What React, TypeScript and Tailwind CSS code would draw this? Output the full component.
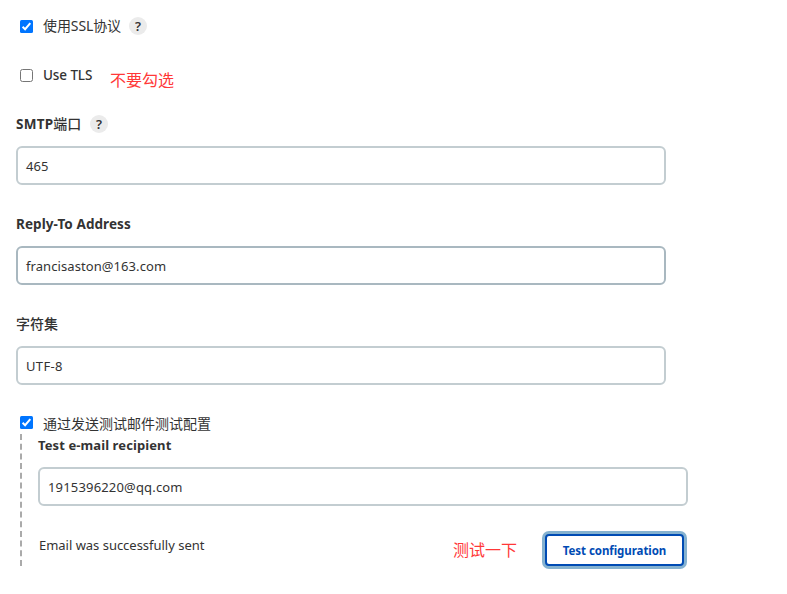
import type { ReactNode } from 'react';

function Checkbox({ checked }: { checked?: boolean }) {
  return checked ? (
    <svg className="h-[13px] w-[13px] shrink-0" viewBox="0 0 13 13">
      <rect width="13" height="13" rx="1.5" fill="#0075ff" />
      <path d="M2.6 6.8 5.1 9.2 10.3 3.2" fill="none" stroke="#fff" strokeWidth="2" />
    </svg>
  ) : (
    <span className="h-[13px] w-[13px] shrink-0 rounded-[2.5px] border border-[#767676] bg-white" />
  );
}

function Help() {
  return (
    <span className="flex h-[18px] w-[18px] shrink-0 items-center justify-center rounded-full bg-[#ebebeb] text-[13px] leading-[18px] font-semibold text-[#333]">
      ?
    </span>
  );
}

function Input({
  value,
  border = 'border-[#c3cdd1]',
  tracking = 'tracking-[0.08px]',
}: {
  value: string;
  border?: string;
  tracking?: string;
}) {
  return (
    <div className={`flex h-[39px] w-[650px] items-center rounded-[6px] border-2 bg-white pt-px pl-2 ${border} ${tracking}`}>
      {value}
    </div>
  );
}

function Label({ children, type = 'text-[13.5px] tracking-[0.08px]' }: { children: ReactNode; type?: string }) {
  return <div className={`flex h-5 items-center font-bold ${type}`}>{children}</div>;
}

export default function App() {
  return (
    <main className="h-[594px] w-[787px] overflow-hidden bg-white pl-4 font-['Noto_Sans','Noto_Sans_CJK_SC',sans-serif] text-[13px] leading-5 text-[#333]">
      <div className="flex h-[52px] items-center pl-1">
        <Checkbox checked />
        <span className="ml-[10px] w-[86px] text-[14px] tracking-[-0.1px] whitespace-nowrap">使用SSL协议</span>
        <Help />
      </div>
      <div className="flex h-[62px] items-start pt-[13px] pl-1">
        <div className="flex h-5 items-center">
          <Checkbox />
          <span className="ml-[10px] w-[67px] text-[13.5px] font-medium tracking-[-0.1px]">Use TLS</span>
        </div>
        <span className="mt-[5px] text-[16px] text-[#ff3838]">不要勾选</span>
      </div>
      <div className="flex h-8 items-start">
        <div className="w-[74px]">
          <Label type="text-[13.5px] tracking-[0.25px]">
            SMTP<span className="text-[14px] font-medium tracking-normal">端口</span>
          </Label>
        </div>
        <div className="pt-px"><Help /></div>
      </div>
      <Input value="465" />
      <div className="h-[61px] pt-[29px]"><Label>Reply-To Address</Label></div>
      <Input value="francisaston@163.com" border="border-[#a9b8c0]" />
      <div className="h-[61px] pt-[29px]">
        <div className="text-[14px] font-medium">字符集</div>
      </div>
      <Input value="UTF-8" tracking="tracking-[0.35px]" />
      <div className="flex h-[49px] items-start pt-[28px] pl-1">
        <div className="pt-[3px]"><Checkbox checked /></div>
        <span className="ml-[10px] text-[14px] leading-[21px]">通过发送测试邮件测试配置</span>
      </div>
      <div className="ml-1 h-[132px] w-[668px] border-l-2 border-dashed border-[#aaa] pl-4">
        <div className="h-[33px] pt-px"><Label type="text-[13px] tracking-[0.1px]">Test e-mail recipient</Label></div>
        <Input value="1915396220@qq.com" tracking="tracking-[0.17px]" />
        <div className="flex pt-[28px]">
          <div className="w-[415px] pt-px pl-px tracking-[-0.02px]">Email was successfully sent</div>
          <div className="w-[92px] pt-[6px] text-[16px] text-[#ff3838]">测试一下</div>
          <button className="h-8 w-[139px] shrink-0 rounded-[4px] border-2 border-[#004bb4] bg-white pt-0.5 text-[11.5px] font-bold tracking-[-0.06px] text-[#004bb4] ring-3 ring-[#85b2d0]">
            Test configuration
          </button>
        </div>
      </div>
    </main>
  );
}
